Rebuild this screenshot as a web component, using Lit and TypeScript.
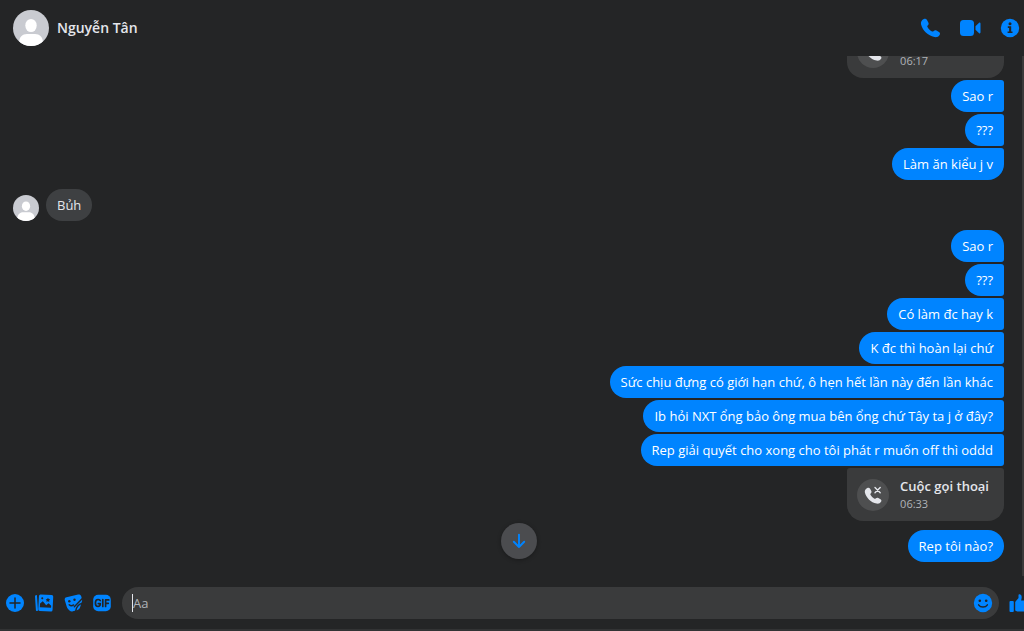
import { LitElement, html, css, svg, nothing } from "lit";
import { customElement, property } from "lit/decorators.js";
import { classMap } from "lit/directives/class-map.js";

type Item =
  | { kind: "text"; text: string; mine: boolean; first?: boolean; last?: boolean }
  | { kind: "call"; title: string; time: string };

const items: Item[] = [
  { kind: "call", title: "Cuộc gọi thoại", time: "06:17" },
  { kind: "text", text: "Sao r", mine: true },
  { kind: "text", text: "???", mine: true },
  { kind: "text", text: "Làm ăn kiểu j v", mine: true, last: true },
  { kind: "text", text: "Bủh", mine: false, first: true, last: true },
  { kind: "text", text: "Sao r", mine: true, first: true },
  { kind: "text", text: "???", mine: true },
  { kind: "text", text: "Có làm đc hay k", mine: true },
  { kind: "text", text: "K đc thì hoàn lại chứ", mine: true },
  { kind: "text", text: "Sức chịu đựng có giới hạn chứ, ô hẹn hết lần này đến lần khác", mine: true },
  { kind: "text", text: "Ib hỏi NXT ổng bảo ông mua bên ổng chứ Tây ta j ở đây?", mine: true },
  { kind: "text", text: "Rep giải quyết cho xong cho tôi phát r muốn off thì oddd", mine: true },
  { kind: "call", title: "Cuộc gọi thoại", time: "06:33" },
  { kind: "text", text: "Rep tôi nào?", mine: true, first: true, last: true },
];

const phonePath =
  "M3.800 1.100C5 .4 6.300.7 7 1.900l1.300 2.500c.6 1.100.4 2-.4 2.800-.7.700-.8 1.200-.3 2.100 1 1.700 2.300 3 4 4 .9.500 1.400.4 2.100-.3.800-.8 1.700-1 2.800-.4l2.400 1.400c1.200.7 1.500 1.800.7 2.900-1.100 1.700-2.900 2.600-5.200 2.100C8 17.800 2.500 12.500 1 6.300.5 4 2 2 3.800 1.100Z";

const icons = {
  phone: svg`<path d=${phonePath} />`,
  video: svg`<rect x="0" y="2" width="14" height="16" rx="3.500" /><path d="M15.500 8.300l3.600-3.500c.5-.5 1.400-.2 1.400.6v9.200c0 .8-.9 1.100-1.400.6l-3.600-3.500z" />`,
  info: svg`<circle cx="10" cy="10" r="9.200" /><g class="cut"><circle cx="10" cy="5.700" r="1.500" /><path d="M7.800 8.300h3.400v5.200h1.300v1.600H7.600v-1.600h1.500V9.900H7.800z" /></g>`,
  plus: svg`<circle cx="10" cy="10" r="9" /><path class="line" d="M10 5v10M5 10h10" stroke-width="1.500" />`,
  photo: svg`<path d="M1 3.400c0-.6.300-1 .9-1.100l1-.2L4 17.800l-1.300.3c-.5 0-.8-.3-.8-.8z" /><g transform="rotate(3 11 10)"><rect x="4.600" y="1.700" width="14.300" height="16.600" rx="1.600" /><g class="cut"><path d="M6.100 14.500v-3.800l2.600-2.400 3.600 3.800 2.300-2 2.700 2.200v2.200z" /><circle cx="8" cy="5.500" r="1" /><path d="M13.700 4.600l.8 1.300 1.500.2-1 1.100.2 1.500-1.500-.6-1.400.6.200-1.500-1-1.100 1.500-.2z" /></g></g>`,
  sticker: svg`<path d="M3.600 4.200l11.500-2.600c1.500-.3 2.600.3 3.100 1.700l.8 2.700c.3 1.200.1 2-.2 3.100l-1.800 5.500c-.4 1.200-1.200 2-2.400 2.400l-4.700 1.300c-1.400.4-2.400.1-3.400-.9l-1.500-1.500c-.7-.7-1-1.400-1.300-2.400L1.800 7.200c-.4-1.600.2-2.700 1.800-3z" /><g class="cut"><circle cx="6.300" cy="8.300" r="1.200" /><circle cx="11.500" cy="6.800" r="1.200" /></g><path class="line" d="M6.200 11.800c1.300 1.200 3.100 1.100 4.400.1M19.300 5.500l-8 8.200M18.800 10.300c-3.300 1-5.300 3.400-6 7.300" stroke-width="1.400" />`,
  gif: svg`<rect x="1.200" y="1.800" width="17.600" height="16.400" rx="5" /><path class="line" d="M8.200 7.600C7.600 6.800 6.900 6.500 6 6.500 4.300 6.500 3.400 8 3.400 10s.9 3.500 2.600 3.500c1.400 0 2.300-1 2.300-2.900H6.300M10.800 6.500v7M13.600 13.500V6.900h3.200M13.600 10.300h2.700" stroke-width="1.700" />`,
  smile: svg`<circle cx="10" cy="10" r="9.200" /><g class="cut"><circle cx="6.800" cy="7.800" r="1.300" /><circle cx="13.200" cy="7.800" r="1.300" /></g><path class="line" d="M5.600 11.800c2 3 6.800 3 8.800 0" stroke-width="1.400" />`,
  like: svg`<rect x="0.500" y="8" width="4.300" height="11" rx="1" /><path d="M6.200 9l3.300-4V2.200C9.500.9 12.700.800 12.700 4.200c0 1.300-.4 2.300-.6 3.300h5.200c2.800 0 2.800 2.700 1.500 3.300 1 .9.700 2.500-.5 2.900.6 1.200 0 2.300-1 2.600.3 1.400-.6 2.200-2.300 2.200H9.500c-1.300 0-2.200-.4-3.300-1z" />`,
  down: svg`<path class="stroke" d="M10 2v15.500M3.500 11l6.500 6.500 6.500-6.500" />`,
  missed: svg`<path transform="translate(1 2) scale(.87)" d=${phonePath} /><path class="mark" d="M12 2.500l5.200 5.200M17.200 2.500L12 7.700" />`,
};

@customElement("ui-icon")
class UiIcon extends LitElement {
  @property() name: keyof typeof icons = "plus";

  static styles = css`
    :host { display: block; width: 20px; height: 20px; flex: none; }
    .icon { display: block; width: 100%; height: 100%; overflow: visible; fill: currentColor; }
    .cut { fill: #242526; }
    .line { fill: none; stroke: #242526; stroke-linecap: round; stroke-linejoin: round; }
    .stroke { fill: none; stroke: currentColor; stroke-width: 2.4; stroke-linecap: round; stroke-linejoin: round; }
    .mark { fill: none; stroke: currentColor; stroke-width: 1.4; stroke-linecap: round; }
  `;

  render() {
    return html`<svg class="icon" viewBox="0 0 20 20" aria-hidden="true">${icons[this.name]}</svg>`;
  }
}

@customElement("user-avatar")
class UserAvatar extends LitElement {
  static styles = css`
    :host { display: block; flex: none; border-radius: 50%; overflow: hidden; background: #c9cbd1; }
    .figure { display: block; width: 100%; height: 100%; fill: #fff; }
  `;

  render() {
    return html`<svg class="figure" viewBox="0 0 36 36" aria-hidden="true">
      <ellipse cx="18" cy="15.500" rx="5.700" ry="6.600" />
      <path d="M6 33c0-6 3.500-9 8-9h8c4.500 0 8 3 8 9v4H6z" />
    </svg>`;
  }
}

@customElement("app-root")
class AppRoot extends LitElement {
  static styles = css`
    :host {
      display: flex;
      flex-direction: column;
      height: 100vh;
      overflow: hidden;
      box-sizing: border-box;
      border-bottom: 2px solid #323334;
      background: #242526;
      color: #e4e6eb;
      font: 13px/20px "Open Sans", "Noto Sans", sans-serif;
    }
    .header {
      display: flex;
      align-items: center;
      gap: 8px;
      flex: none;
      height: 56px;
      padding: 0 4px 0 13px;
    }
    .header-avatar { width: 36px; height: 36px; }
    .name { margin: 0; flex: 1; font-size: 14px; line-height: 20px; font-weight: 600; }
    .actions { display: flex; gap: 20px; }
    .icon-button {
      display: block;
      flex: none;
      padding: 0;
      border: 0;
      background: none;
      color: #0084ff;
      cursor: pointer;
    }
    .body { position: relative; display: flex; flex: 1; min-height: 0; }
    .messages {
      display: flex;
      flex-direction: column;
      justify-content: flex-end;
      gap: 2px;
      flex: 1;
      min-width: 0;
      overflow: hidden;
      margin: 0;
      padding: 0 18px 14px 13px;
      border-right: 2px solid #3a3939;
      list-style: none;
    }
    .row { display: flex; align-items: flex-end; gap: 7px; flex: none; }
    .row.mine { justify-content: flex-end; }
    .row.first { margin-top: 7px; }
    .row-avatar { width: 26px; height: 26px; }
    .bubble {
      padding: 6px 11px;
      border-radius: 16px;
      background: #3e4042;
    }
    .mine .bubble {
      border-radius: 16px 3px 3px 16px;
      background: #0084ff;
      color: #fff;
    }
    .mine.first .bubble { border-top-right-radius: 16px; }
    .mine.last .bubble { border-bottom-right-radius: 16px; }
    .call {
      display: flex;
      align-items: center;
      gap: 11px;
      height: 53px;
      box-sizing: border-box;
      padding: 0 15px 0 10px;
      border-radius: 3px 3px 16px 16px;
      background: #3a3b3c;
    }
    .call-icon {
      display: grid;
      place-items: center;
      width: 32px;
      height: 32px;
      border-radius: 50%;
      background: #4e4f50;
    }
    .call-title { font-weight: 600; line-height: 18px; }
    .call-time { font-size: 11px; line-height: 18px; color: #b0b3b8; }
    .jump {
      position: absolute;
      bottom: 17px;
      left: calc(50% + 7px);
      display: grid;
      place-items: center;
      width: 36px;
      height: 36px;
      margin-left: -18px;
      padding: 0;
      border: 0;
      border-radius: 50%;
      background: #4b4c4f;
      box-shadow: 0 1px 4px rgb(0 0 0 / 30%);
      color: #0084ff;
    }
    .jump-icon { width: 16px; height: 16px; }
    .composer {
      display: flex;
      align-items: center;
      gap: 10px;
      flex: none;
      height: 53px;
      overflow: hidden;
      padding-left: 5px;
    }
    .tools { display: flex; gap: 9px; }
    .field {
      display: flex;
      align-items: center;
      flex: 1;
      min-width: 0;
      height: 32px;
      padding: 0 6px 0 10px;
      border-radius: 16px;
      background: #3a3b3c;
    }
    .field::before { content: ""; width: 1px; height: 18px; background: #e4e6eb; }
    .input {
      flex: 1;
      min-width: 0;
      padding: 0;
      border: 0;
      outline: 0;
      background: none;
      color: #e4e6eb;
      font: inherit;
    }
    .input::placeholder { color: #b0b3b8; opacity: 1; }
    .like { margin-right: -5px; }
  `;

  private button(label: string, icon: string, extra = "") {
    return html`<button class="icon-button ${extra}" type="button" aria-label=${label}>
      <ui-icon name=${icon}></ui-icon>
    </button>`;
  }

  private row(item: Item) {
    if (item.kind === "call") {
      return html`<li class="row mine">
        <div class="call">
          <span class="call-icon"><ui-icon name="missed"></ui-icon></span>
          <div>
            <div class="call-title">${item.title}</div>
            <div class="call-time">${item.time}</div>
          </div>
        </div>
      </li>`;
    }
    const classes = { row: true, mine: item.mine, first: !!item.first, last: !!item.last };
    return html`<li class=${classMap(classes)}>
      ${item.mine ? nothing : html`<user-avatar class="row-avatar"></user-avatar>`}
      <div class="bubble">${item.text}</div>
    </li>`;
  }

  render() {
    return html`
      <header class="header">
        <user-avatar class="header-avatar"></user-avatar>
        <h1 class="name">Nguyễn Tân</h1>
        <div class="actions">
          ${this.button("Gọi thoại", "phone")} ${this.button("Gọi video", "video")}
          ${this.button("Thông tin", "info")}
        </div>
      </header>
      <main class="body">
        <ul class="messages">${items.map((item) => this.row(item))}</ul>
        <button class="jump" type="button" aria-label="Cuộn xuống">
          <ui-icon class="jump-icon" name="down"></ui-icon>
        </button>
      </main>
      <footer class="composer">
        <div class="tools">
          ${this.button("Thêm", "plus")} ${this.button("Ảnh", "photo")}
          ${this.button("Nhãn dán", "sticker")} ${this.button("GIF", "gif")}
        </div>
        <div class="field">
          <input class="input" type="text" placeholder="Aa" aria-label="Tin nhắn" />
          ${this.button("Biểu tượng cảm xúc", "smile")}
        </div>
        ${this.button("Thích", "like", "like")}
      </footer>
    `;
  }
}
